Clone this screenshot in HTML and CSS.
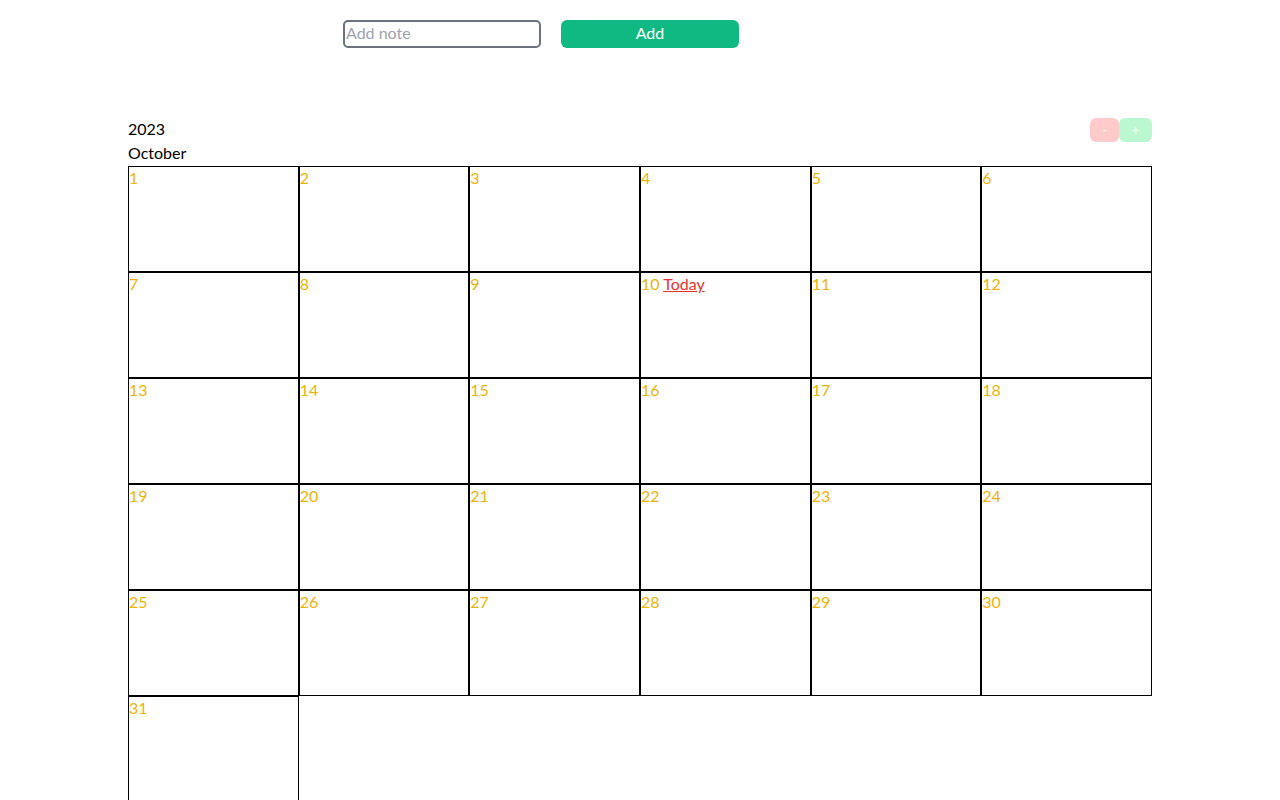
FILE: index.html
```html
<!DOCTYPE html>
<html>
<head>
<meta charset="utf-8">
<link rel="stylesheet" href="styles.css">
</head>
<body>
<div class="page">
  <form class="note-form">
    <input class="note-input" type="text" placeholder="Add note">
    <button class="add-btn" type="button">Add</button>
  </form>
  <div class="calendar">
    <div class="cal-head">
      <div class="titles">
        <div class="year">2023</div>
        <div class="month">October</div>
      </div>
      <div class="nav">
        <button class="nav-btn minus" type="button">-</button>
        <button class="nav-btn plus" type="button">+</button>
      </div>
    </div>
    <div class="grid">
      <div class="day"><span class="num">1</span></div>
      <div class="day"><span class="num">2</span></div>
      <div class="day"><span class="num">3</span></div>
      <div class="day"><span class="num">4</span></div>
      <div class="day"><span class="num">5</span></div>
      <div class="day"><span class="num">6</span></div>
      <div class="day"><span class="num">7</span></div>
      <div class="day"><span class="num">8</span></div>
      <div class="day"><span class="num">9</span></div>
      <div class="day"><span class="num">10</span> <a class="today" href="#">Today</a></div>
      <div class="day"><span class="num">11</span></div>
      <div class="day"><span class="num">12</span></div>
      <div class="day"><span class="num">13</span></div>
      <div class="day"><span class="num">14</span></div>
      <div class="day"><span class="num">15</span></div>
      <div class="day"><span class="num">16</span></div>
      <div class="day"><span class="num">17</span></div>
      <div class="day"><span class="num">18</span></div>
      <div class="day"><span class="num">19</span></div>
      <div class="day"><span class="num">20</span></div>
      <div class="day"><span class="num">21</span></div>
      <div class="day"><span class="num">22</span></div>
      <div class="day"><span class="num">23</span></div>
      <div class="day"><span class="num">24</span></div>
      <div class="day"><span class="num">25</span></div>
      <div class="day"><span class="num">26</span></div>
      <div class="day"><span class="num">27</span></div>
      <div class="day"><span class="num">28</span></div>
      <div class="day"><span class="num">29</span></div>
      <div class="day"><span class="num">30</span></div>
      <div class="day"><span class="num">31</span></div>
    </div>
  </div>
</div>
</body>
</html>
```
FILE: styles.css
```css
* { box-sizing: border-box; }
html, body { margin: 0; padding: 0; background: #fff; }
body {
  font-family: "Lato", "Noto Sans", sans-serif;
  font-size: 16px;
  line-height: 24px;
  color: #000;
}
.page { padding-top: 20px; }
.note-form {
  display: flex;
  gap: 20px;
  padding-left: 343px;
  height: 28px;
}
.note-input {
  width: 198px;
  height: 28px;
  border: 2px solid #6b7280;
  border-radius: 5px;
  padding: 0 1px 3px;
  font: inherit;
  font-size: 16px;
  color: #374151;
  outline: none;
}
.note-input::placeholder { color: #9ca3af; }
.add-btn {
  width: 178px;
  height: 28px;
  border: 0;
  border-radius: 6px;
  background: #10b981;
  color: #fff;
  font: inherit;
  font-size: 16px;
  padding: 0 0 2px;
}
.calendar {
  width: 1024px;
  margin: 69px auto 0;
}
.cal-head {
  display: flex;
  justify-content: space-between;
  align-items: flex-start;
}
.nav { display: flex; padding-top: 1px; }
.nav-btn {
  height: 24px;
  border: 0;
  border-radius: 6px;
  color: #fff;
  font: inherit;
  font-size: 14px;
  padding: 0;
}
.minus { width: 29px; background: #fecaca; }
.plus { width: 33px; background: #bbf7d0; }
.grid {
  display: flex;
  flex-wrap: wrap;
  margin-top: 1px;
}
.day {
  width: calc(100% / 6);
  height: 106px;
  border: 1px solid #000;
  padding: 0;
  line-height: 22px;
}
.num { color: #eab308; }
.today { color: #e3342f; text-decoration: underline; }
```
